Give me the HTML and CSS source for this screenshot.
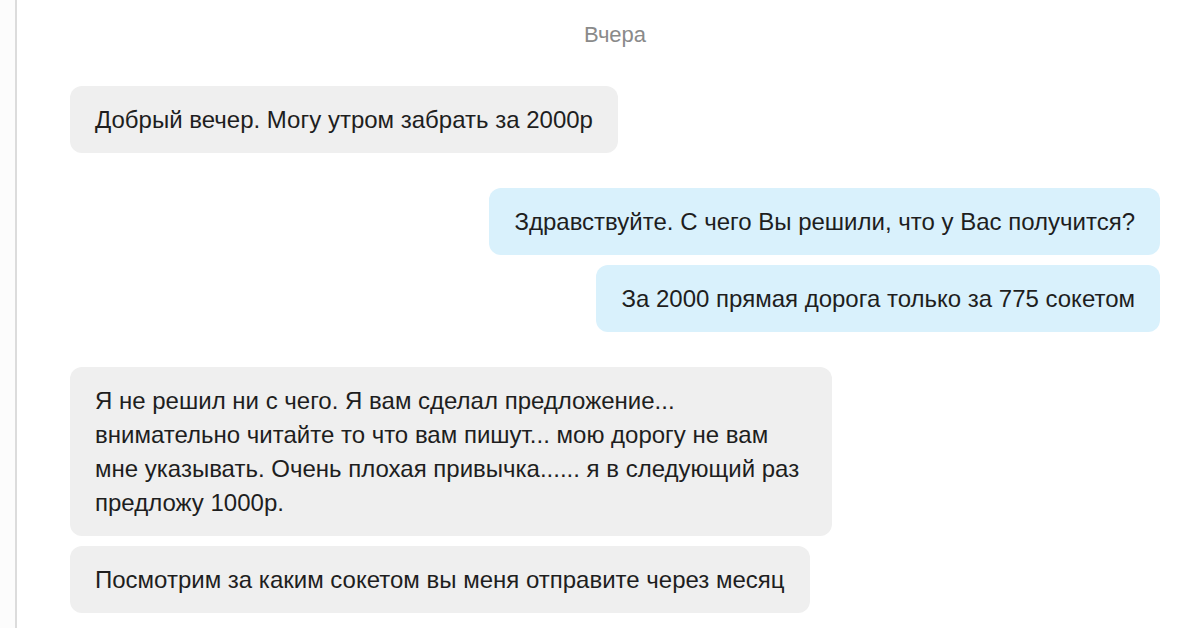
FILE: index.html
```html
<!DOCTYPE html>
<html lang="ru">
<head>
  <meta charset="UTF-8">
  <title>Диалог</title>
  <link rel="stylesheet" href="styles.css">
</head>
<body>
  <div class="side"></div>
  <div class="chat">
    <div class="day">Вчера</div>

    <div class="group in">
      <div class="msg">Добрый вечер. Могу утром забрать за 2000р</div>
    </div>

    <div class="group out">
      <div class="msg">Здравствуйте. С чего Вы решили, что у Вас получится?</div>
      <div class="msg">За 2000 прямая дорога только за 775 сокетом</div>
    </div>

    <div class="group in">
      <div class="msg">Я не решил ни с чего. Я вам сделал предложение... внимательно читайте то что вам пишут... мою дорогу не вам мне указывать. Очень плохая привычка...... я в следующий раз предложу 1000р.</div>
      <div class="msg">Посмотрим за каким сокетом вы меня отправите через месяц</div>
    </div>
  </div>
</body>
</html>
```

FILE: styles.css
```css
/* reset */
*{
  margin: 0;
  padding: 0;
  box-sizing: border-box;
}
html, body{
  height: 100%;
}
body{
  display: flex;
  background-color: #fcfcfc;
  font-family: "Liberation Sans", Arial, sans-serif;
  color: #1e1e1e;
  overflow: hidden;
}
.side{
  width: 17px;
  flex: none;
  border-right: 2px solid #dcdcdc;
}
.chat{
  flex: 1;
  background-color: #fff;
  padding: 20px 40px 0 53px;
  display: flex;
  flex-direction: column;
}
.day{
  text-align: center;
  color: #8a8a8a;
  font-size: 22px;
  line-height: 30px;
  margin-bottom: 36px;
}
.group{
  display: flex;
  flex-direction: column;
  gap: 10px;
  margin-bottom: 35px;
}
.group.in{
  align-items: flex-start;
}
.group.out{
  align-items: flex-end;
}
.msg{
  max-width: 762px;
  padding: 17px 25px 16px;
  border-radius: 12px;
  font-size: 24px;
  line-height: 34px;
}
.msg + .msg{
  margin-top: 0;
}
.in .msg{
  background-color: #efefef;
}
.out .msg{
  background-color: #d9f1fc;
}
```
